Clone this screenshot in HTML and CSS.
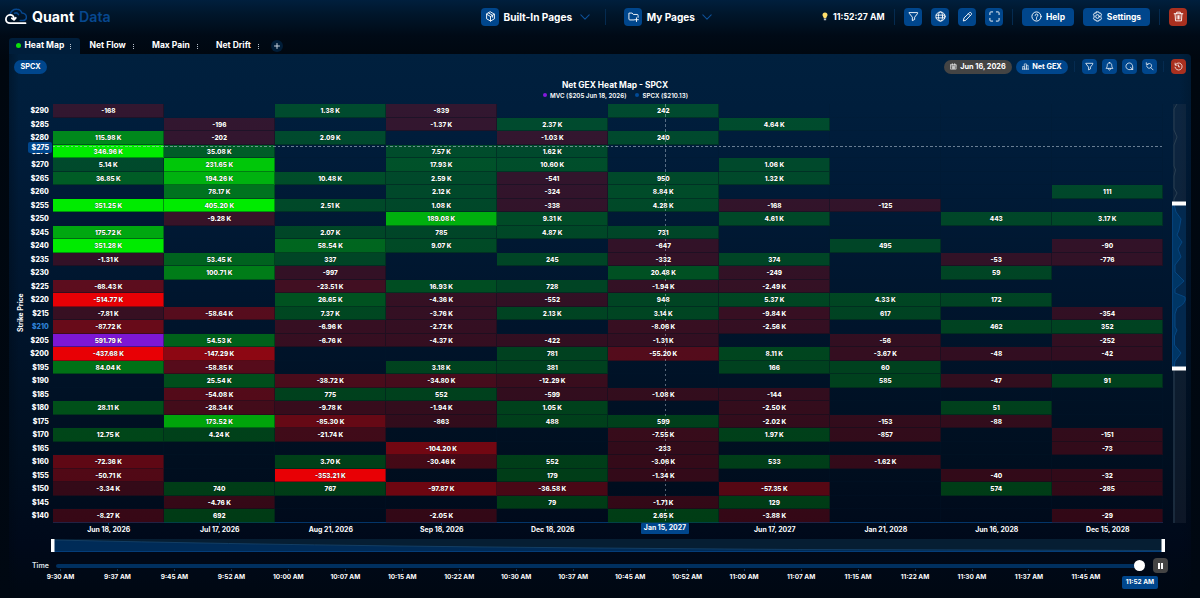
FILE: index.html
```html
<!DOCTYPE html>
<html lang="en">
<head>
<meta charset="utf-8">
<title>Quant Data</title>
<link rel="stylesheet" href="styles.css">
</head>
<body>
<svg width="0" height="0" class="defs">
  <symbol id="i-filter" viewBox="0 0 24 24"><path d="M3 3.5h18l-.5 2.5-6 7.500v5l-5 2.500v-7.500L3.500 6z"/></symbol>
  <symbol id="i-search" viewBox="0 0 24 24"><path d="M6.500 5.500a6.500 6.500 0 1 1-2 4.700M15.500 15l6 6M3.500 2v4.500H8"/></symbol>
  <symbol id="i-chev" viewBox="0 0 24 24"><path d="M2 7l10 10L22 7"/></symbol>
</svg>
<header class="topbar">
  <div class="brand">
    <svg class="logo" viewBox="0 0 22 17"><path class="lg-blue" d="M5 6.500C6 2.800 9 1 12 1.200c2.500.1 4.200 1.800 4.900 3.700 2.600.2 4.600 2 4.500 4.400-.1 2.200-1.700 3.200-3.600 3.300h-2.600M9.500 5.200c1.500-.6 3.200-.1 4 1.400"/><path class="lg-white" d="M20.500 15.200H5C2.600 15.200.9 13.500.9 11.300S2.600 7 5 6.900c2.400-.1 4 1.100 4 4.300M6.800 10.200l2.200 1.600 1.800-2"/></svg>
    <span class="brand-a">Quant</span><span class="brand-b">Data</span>
  </div>
  <nav class="pages">
    <span class="btn sq"><svg viewBox="0 0 24 24"><path d="M12 2l8.500 5v10L12 22l-8.500-5V7zM3.500 7l8.500 5 8.500-5M12 12v10M8 4.500l8.500 5v4"/></svg></span>
    <span class="page-name">Built-In Pages</span><svg class="chev"><use href="#i-chev"/></svg>
    <i class="vr"></i>
    <span class="btn sq"><svg viewBox="0 0 24 24"><path d="M13 19.500H4a2 2 0 0 1-2-2V4.500h7l2.500 3H20a2 2 0 0 1 2 2V14M18.500 15v8M14.500 19h8"/></svg></span>
    <span class="page-name">My Pages</span><svg class="chev"><use href="#i-chev"/></svg>
  </nav>
  <div class="tools">
    <svg class="bulb" viewBox="0 0 12 18"><path class="glass" d="M6 1a5 5 0 0 0-5 5c0 2.500 2.200 3.700 2.500 6.500h5C8.800 9.700 11 8.500 11 6a5 5 0 0 0-5-5z"/><path class="base" d="M3.700 13h4.600v3.500H3.700z"/></svg>
    <span class="clock">11:52:27 AM</span>
    <i class="vr"></i>
    <span class="btn sq"><svg><use href="#i-filter"/></svg></span>
    <span class="btn sq"><svg viewBox="0 0 24 24"><circle cx="12" cy="12" r="10"/><ellipse cx="12" cy="12" rx="4.500" ry="10"/><path d="M2.500 9h19M2.500 15h19"/></svg></span>
    <span class="btn sq"><svg viewBox="0 0 24 24"><path d="M3 21l1.500-6L16.500 3.500c2-1.500 5.500 1.500 4 4L9 19.500zM14 6l4 4"/></svg></span>
    <span class="btn sq"><svg viewBox="0 0 24 24"><path d="M2 8V4a2 2 0 0 1 2-2h4M16 2h4a2 2 0 0 1 2 2v4M22 16v4a2 2 0 0 1-2 2h-4M8 22H4a2 2 0 0 1-2-2v-4"/></svg></span>
    <i class="vr"></i>
    <span class="btn help"><svg viewBox="0 0 24 24"><circle cx="12" cy="12" r="10"/><path d="M9 9.500c0-4 6.500-3.800 6 0-.3 2-3 2-3 4.500M12 16.500v1.500"/></svg>Help</span>
    <span class="btn settings"><svg viewBox="0 0 24 24"><path d="M9.500 2h5l1 2.500 3-.2 2.300 4-1.500 2.200v3l1.500 2.200-2.300 4-3-.2-1 2.500h-5l-1-2.500-3 .2-2.300-4 1.500-2.200v-3L3.200 8.300l2.300-4 3 .2z"/><circle cx="12" cy="12" r="4"/></svg>Settings</span>
    <i class="vr"></i>
    <span class="btn sq danger"><svg viewBox="0 0 24 24"><path d="M2.500 6h19M8 6V2.500h8V6M4.500 6l1 15.500h13l1-15.500M9 10v7.500M12 10v7.500M15 10v7.500"/></svg></span>
  </div>
</header>

<div class="tabs">
  <div class="tab active"><i class="live"></i><span>Heat Map</span><i class="more"></i></div>
  <div class="tab t2"><span>Net Flow</span><i class="more"></i></div>
  <div class="tab t3"><span>Max Pain</span><i class="more"></i></div>
  <div class="tab t4"><span>Net Drift</span><i class="more"></i></div>
  <span class="add"><svg viewBox="0 0 12 12"><path d="M6 3.500v5M3.500 6h5"/></svg></span>
</div>

<main class="panel">
  <div class="bar">
    <span class="pill symbol">SPCX</span>
    <div class="bar-right">
      <span class="pill date"><svg viewBox="0 0 24 24"><path d="M3 5h18v16H3zM3 10h18M8 2v5M16 2v5M7 14h10M7 17.500h10M10 11v9M14 11v9"/></svg>Jun 16, 2026</span>
      <span class="pill metric"><svg viewBox="0 0 24 24"><path d="M2 21V12h6v9M8 21V3h7v18M15 21V8h6v13M1 21h22"/></svg>Net GEX</span>
      <i class="vr"></i>
      <span class="btn mini"><svg><use href="#i-filter"/></svg></span>
      <span class="btn mini"><svg viewBox="0 0 24 24"><path d="M12 2c-4 0-6 3-6 7 0 4-1.500 5.500-3 8h18c-1.500-2.500-3-4-3-8 0-4-2-7-6-7zM9 18c0 5 6 5 6 0"/></svg></span>
      <span class="btn mini"><svg viewBox="0 0 24 24"><path d="M13 20.500A9 9 0 1 1 20.500 13M14.500 14l6 6M20.500 14.500V20H15"/></svg></span>
      <span class="btn mini"><svg><use href="#i-search"/></svg></span>
      <i class="vr"></i>
      <span class="btn mini danger"><svg viewBox="0 0 24 24"><path d="M4 7a9.500 9.500 0 1 1-1.200 7M3 3v5.500h5.500M12 8v5h3"/></svg></span>
    </div>
  </div>
  <h1 class="title">Net GEX Heat Map - SPCX</h1>
  <div class="legend"><i class="key mvc"></i><span>MVC ($205 Jun 18, 2026)</span><i class="key spot"></i><span>SPCX ($210.13)</span></div>

  <section class="chart">
    <div class="y-title"><span>Strike Price</span></div>
    <div class="y-axis" id="strikes"></div>
    <div class="plot">
      <i class="cross-v"></i>
      <div class="heat" id="heat"></div>
      <i class="cross-h"></i>
      <span class="y-tag">$275</span>
    </div>
    <div class="range-y">
      <svg viewBox="0 0 14 419" preserveAspectRatio="none">
        <rect class="r-bg" x="1" width="13" height="419"/>
        <path class="r-off" d="M5 0L2 5V26L5 33L2 41V62L3.500 66L2 72V84L5 89L2 95V100M2 265V419"/>
        <rect class="r-sel" x="1" y="100" width="13" height="165"/>
        <path class="r-on" d="M1 100H2L4 108L9 115L7 126L5 131L10 138L6 145L9 153L3 161V168L12 177L3 185V189L13 193Q15 199 5 204L3 210V223L5 226L2.500 232V241L9 249L3 257L2 265H1z"/>
        <rect class="r-handle" y="97.500" width="14" height="4"/>
        <rect class="r-handle" y="262.500" width="14" height="4"/>
      </svg>
    </div>
  </section>

  <div class="x-axis" id="dates"></div>

  <div class="range-x">
    <svg viewBox="0 0 1114 13" preserveAspectRatio="none">
      <rect class="rx-bg" x="2" width="1110" height="12"/>
      <path class="rx-fill" d="M2 1Q180 5 348 7T748 10.500L1112 11.500V12.500H2z"/>
      <path class="rx-line" d="M2 1Q180 5 348 7T748 10.500L1112 11.500"/>
      <path class="rx-base" d="M2 12.500H1112"/>
      <rect class="r-handle" width="3.500" height="13"/>
      <rect class="r-handle" x="1110.500" width="3.500" height="13"/>
    </svg>
  </div>

  <div class="time">
    <span class="time-label">Time</span>
    <div class="track"><i class="knob"></i></div>
    <span class="pause"><i></i><i></i></span>
  </div>
  <div class="times" id="times"></div>
</main>
<script src="script.js"></script>
</body>
</html>
```
FILE: styles.css
```css
* { box-sizing: border-box; }
body {
  margin: 0; width: 1200px; height: 598px; overflow: hidden;
  display: flex; flex-direction: column;
  font-family: Inter, "Liberation Sans", sans-serif; font-weight: 700; color: #fff;
  background: linear-gradient(#001f3d 0, #00162b 14px, #000a16 36px, #00070f 60px, #000812 100%);
}
i { font-style: normal; display: block; flex: none; }
svg { fill: none; stroke: #fff; stroke-width: 2; stroke-linecap: round; stroke-linejoin: round; display: block; flex: none; }
.defs { position: absolute; }

.topbar { height: 38px; padding: 8px 13px 13px 5px; display: flex; align-items: center; flex: none; }
.brand { width: 476px; display: flex; align-items: center; font-size: 14.200px; line-height: 18px; }
.logo { width: 22px; height: 17px; margin-right: 5px; stroke-width: 1.500; }
.lg-blue { stroke: #07488f; }
.lg-white { stroke-width: 1.800; }
.brand-a { width: 47px; }
.brand-b { color: #07488f; font-weight: 600; }
.pages { width: 341px; display: flex; align-items: center; }
.page-name { font-size: 10.100px; margin-left: 4.500px; white-space: nowrap; }
.chev { width: 10px; height: 10px; margin-left: 7.500px; stroke: #0d5199; stroke-width: 2.500; }
.pages .vr { margin: 0 18px 0 15.500px; }
.vr { width: 1px; height: 16px; background: #052b50; }
.btn { height: 18px; border-radius: 4px; background: #00468c; display: flex; align-items: center; justify-content: center; flex: none; }
.sq { width: 18px; }
.sq svg { width: 11px; height: 11px; }
.danger { background: #a9301f; }
.tools { display: flex; align-items: center; }
.bulb { width: 6px; height: 9px; margin-right: 5px; stroke: none; }
.glass { fill: #ffdf6b; }
.base { fill: #b9bec5; }
.clock { width: 52px; font-size: 8.700px; white-space: nowrap; }
.tools .vr { margin: 0 9px; }
.tools .btn.sq + .btn.sq { margin-left: 9px; }
.help, .settings { font-size: 8.500px; gap: 4px; }
.help { width: 52px; }
.settings { width: 67px; margin-left: 9px; }
.help svg, .settings svg { width: 11px; height: 11px; }

.tabs { height: 16px; padding-left: 9px; display: flex; font-size: 8.500px; flex: none; }
.tab { display: flex; align-items: center; height: 16px; padding-bottom: 2px; white-space: nowrap; }
.tab .more { margin-left: auto; }
.active { width: 71px; padding: 0 9px 2px 7px; background: #001e3b; border-radius: 3px 3px 0 0; }
.live { width: 5px; height: 5px; margin: 1px 3.500px 0 0; border-radius: 50%; background: #0be30b; }
.t2 { width: 44px; margin-left: 9.500px; }
.t3 { width: 46px; margin-left: 18.500px; }
.t4 { width: 42.500px; margin-left: 18px; }
.more { width: 1px; height: 5px; margin-top: 3px; background: repeating-linear-gradient(#b9c3cf 0 1px, transparent 1px 2px); }
.add { width: 12px; height: 12px; margin: 2px 0 0 12px; border-radius: 50%; background: #001d38; }
.add svg { stroke-width: 1; stroke: #c9d4e0; }

.panel {
  width: 1182px; height: 544px; margin-left: 9px; padding-top: 5px; border-radius: 0 4px 0 0; flex: none;
  background: linear-gradient(90deg, rgba(0,7,15,.3) 0, transparent 10px, transparent 1170px, rgba(0,7,15,.2) 100%), linear-gradient(#00203e 0, #001d3b 80px, #00152d 250px, #000f20 400px, #00091a 490px, #000812 544px);
}
.bar { height: 15px; padding: 0 5px; display: flex; align-items: center; justify-content: space-between; }
.bar-right { display: flex; align-items: center; }
.pill { height: 14px; border-radius: 7px; display: flex; align-items: center; justify-content: center; gap: 3px; font-size: 7.300px; white-space: nowrap; background: #00468c; }
.pill svg { width: 7px; height: 7px; }
.symbol { width: 33px; }
.date { width: 68px; background: #444; }
.metric { width: 52px; margin-left: 4px; }
.bar-right .vr { height: 11px; margin: 0 7px 0 6.500px; }
.mini { width: 15px; height: 15px; }
.mini svg { width: 9px; height: 9px; }
.mini + .mini { margin-left: 4.700px; }
.title { height: 11px; margin: 5.500px 0 0 30px; font-size: 8.400px; line-height: 11px; font-weight: 700; text-align: center; }
.legend { height: 9px; margin: 0 0 4.500px 31px; display: flex; align-items: center; justify-content: center; font-size: 6.200px; font-weight: 600; }
.key { width: 4px; height: 4px; border-radius: 50%; margin-right: 3px; }
.mvc { background: #8419dc; }
.spot { background: #004b97; margin-left: 9px; }

.chart { height: 418.500px; display: flex; font-size: 6.900px; font-weight: 800; }
.y-title { width: 22px; position: relative; }
.y-title span { position: absolute; left: 6.500px; top: 188px; height: 40px; writing-mode: vertical-rl; transform: rotate(180deg); font-size: 6.900px; line-height: 10px; font-weight: 700; white-space: nowrap; }
.y-axis { width: 22.300px; padding-right: 4.500px; text-align: right; }
.y-axis div { height: 13.500px; line-height: 13.500px; white-space: nowrap; margin-left: -5px; }
.y-axis .spot-price { color: #2f83d8; }
.plot { width: 1110px; position: relative; border-bottom: 1px solid #043d79; }
.heat { display: grid; grid-template-columns: repeat(10, 111px); grid-auto-rows: 13.500px; }
.cell { border: solid rgba(0,15,30,.4); border-width: 0 1px 1px 0; text-align: center; font-size: 6.400px; line-height: 14px; text-shadow: 0 0 1px rgba(0,0,0,.7); white-space: nowrap; }
.empty { border-color: rgba(0,25,45,.2); }
.cross-h { position: absolute; left: 0; right: 0; top: 42px; height: 1px; background: repeating-linear-gradient(90deg, rgba(190,205,220,.55) 0 2.500px, transparent 2.500px 4.500px); }
.cross-v { position: absolute; top: 0; bottom: 0; left: 612px; width: 1px; background: repeating-linear-gradient(rgba(190,205,220,.45) 0 2.500px, transparent 2.500px 5px); }
.y-tag { position: absolute; left: -25px; top: 37.500px; width: 24px; height: 11px; border-radius: 2px; background: #00468c; line-height: 11px; text-align: center; }
.range-y { width: 14px; margin-left: 8.700px; }
.range-y svg { width: 14px; height: 419px; }
.r-bg { fill: rgba(60,70,80,.22); stroke: none; }
.r-off { stroke: #293f52; stroke-width: 1; }
.r-sel { fill: #002c57; fill-opacity: .75; stroke: none; }
.r-on { fill: #003665; stroke: #064681; stroke-width: 1; }
.r-handle { fill: #fff; stroke: none; }

.x-axis { height: 16.500px; margin-left: 44.300px; display: grid; grid-template-columns: repeat(10, 111px); font-size: 6.900px; line-height: 9px; text-align: center; }
.x-axis span { padding-top: 2.500px; background: linear-gradient(#043d79, #043d79) 55px 0 / 1px 2px no-repeat; }
.x-axis .hot { width: 48px; height: 11px; padding-top: 0; line-height: 10.500px; margin: .5px 0 0 32.700px; border-radius: 1px; background: #00468c; }
.range-x { margin-left: 42px; height: 13px; }
.range-x svg { width: 1114px; height: 13px; }
.rx-bg { fill: #061e33; stroke: none; }
.rx-fill { fill: #002b57; stroke: none; }
.rx-line { stroke: #17446b; stroke-width: .8; }
.rx-base { stroke: #043d79; stroke-width: 1; }

.time { height: 15px; margin-top: 6px; display: flex; align-items: center; }
.time-label { width: 47px; padding-left: 23px; font-size: 7px; font-weight: 600; color: #dfe5ec; }
.track { width: 1084px; height: 4px; background: #003060; border-radius: 2px; position: relative; }
.knob { position: absolute; right: -5px; top: -3.500px; width: 11px; height: 11px; border-radius: 50%; background: #fff; }
.pause { width: 15px; height: 15px; margin-left: 13px; border-radius: 4px; background: #444; display: flex; align-items: center; justify-content: center; gap: 1px; }
.pause i { width: 2px; height: 6px; background: #fff; }
.times { margin-left: 23px; display: grid; grid-template-columns: repeat(20, 56.970px); font-size: 6.500px; line-height: 9px; text-align: center; }
.times span { margin-top: -4px; padding-top: 4px; background: linear-gradient(#103a60, #103a60) 28px 0 / 1px 2px no-repeat; }
.times .now { width: 36px; height: 13px; padding: 0; line-height: 13px; margin: 2.500px 0 0 7.500px; border-radius: 2px; background: #00468c; }
```
FILE: script.js
```js
// One row per strike, from $290 down in steps of $5; "K" means thousands of dollars.
const rows = [
  "-168||1.38 K|-839||242||||",
  "|-196||-1.37 K|2.37 K||4.64 K|||",
  "115.98 K|-202|2.09 K||-1.03 K|240||||",
  "346.96 K|35.08 K||7.57 K|1.62 K|||||",
  "5.14 K|231.65 K||17.93 K|10.60 K||1.06 K|||",
  "36.85 K|194.26 K|10.48 K|2.59 K|-541|950|1.32 K|||",
  "|78.17 K||2.12 K|-324|8.84 K||||111",
  "351.25 K|405.20 K|2.51 K|1.08 K|-338|4.28 K|-168|-125||",
  "|-9.28 K||189.08 K|9.31 K||4.61 K||443|3.17 K",
  "175.72 K||2.07 K|785|4.87 K|731||||",
  "351.28 K||58.54 K|9.07 K||-647||495||-90",
  "-1.31 K|53.45 K|337||245|-332|374||-53|-776",
  "|100.71 K|-997|||20.48 K|-249||59|",
  "-68.43 K||-23.51 K|16.93 K|728|-1.94 K|-2.49 K|||",
  "-514.77 K||26.65 K|-4.36 K|-552|948|5.37 K|4.33 K|172|",
  "-7.81 K|-58.64 K|7.37 K|-3.76 K|2.13 K|3.14 K|-9.84 K|617||-354",
  "-87.72 K||-6.96 K|-2.72 K||-8.06 K|-2.56 K||462|352",
  "591.79 K|54.53 K|-6.76 K|-4.37 K|-422|-1.31 K||-56||-252",
  "-437.68 K|-147.29 K|||781|-55.20 K|8.11 K|-3.67 K|-48|-42",
  "84.04 K|-58.85 K||3.18 K|381||166|60||",
  "|25.54 K|-38.72 K|-34.80 K|-12.29 K|||585|-47|91",
  "|-54.08 K|775|552|-599|-1.08 K|-144|||",
  "28.11 K|-28.34 K|-9.78 K|-1.94 K|1.05 K||-2.50 K||51|",
  "|173.52 K|-85.30 K|-863|488|599|-2.02 K|-153|-88|",
  "12.75 K|4.24 K|-21.74 K|||-7.55 K|1.97 K|-857||-151",
  "|||-104.20 K||-233||||-73",
  "-72.36 K||3.70 K|-30.46 K|552|-3.06 K|533|-1.62 K||",
  "-50.71 K||-353.21 K||179|-1.34 K|||-40|-32",
  "-3.34 K|740|767|-97.87 K|-36.58 K||-57.35 K||574|-285",
  "|-4.76 K|||79|-1.71 K|129|||",
  "-8.27 K|692||-2.05 K||2.65 K|-3.88 K|||-29"
];

const heat = document.getElementById("heat");
const strikes = document.getElementById("strikes");
const PEAK = 591.79;

function fill(text) {
  const k = parseFloat(text) / (text.endsWith("K") ? 1 : 1000);
  if (k === PEAK) return "#7d17d4";
  const alpha = 0.215 + 0.785 * Math.min(1, Math.abs(k) / (PEAK / 2));
  return `rgba(${k < 0 ? "232,0,5" : "0,235,0"},${alpha.toFixed(3)})`;
}

rows.forEach((row, r) => {
  const label = document.createElement("div");
  const strike = 290 - r * 5;
  label.textContent = "$" + strike;
  if (strike === 210) label.className = "spot-price";
  strikes.append(label);
  row.split("|").forEach(text => {
    const cell = document.createElement("div");
    cell.className = text ? "cell" : "cell empty";
    if (text) {
      cell.textContent = text;
      cell.style.backgroundColor = fill(text);
    }
    heat.append(cell);
  });
});

function labels(id, list, marked, cls) {
  const host = document.getElementById(id);
  list.forEach(text => {
    const span = document.createElement("span");
    span.textContent = text;
    if (text === marked) span.className = cls;
    host.append(span);
  });
}

labels("dates", ["Jun 18, 2026", "Jul 17, 2026", "Aug 21, 2026", "Sep 18, 2026", "Dec 18, 2026",
  "Jan 15, 2027", "Jun 17, 2027", "Jan 21, 2028", "Jun 16, 2028", "Dec 15, 2028"], "Jan 15, 2027", "hot");
labels("times", ["9:30 AM", "9:37 AM", "9:45 AM", "9:52 AM", "10:00 AM", "10:07 AM", "10:15 AM",
  "10:22 AM", "10:30 AM", "10:37 AM", "10:45 AM", "10:52 AM", "11:00 AM", "11:07 AM", "11:15 AM",
  "11:22 AM", "11:30 AM", "11:37 AM", "11:45 AM", "11:52 AM"], "11:52 AM", "now");
```
